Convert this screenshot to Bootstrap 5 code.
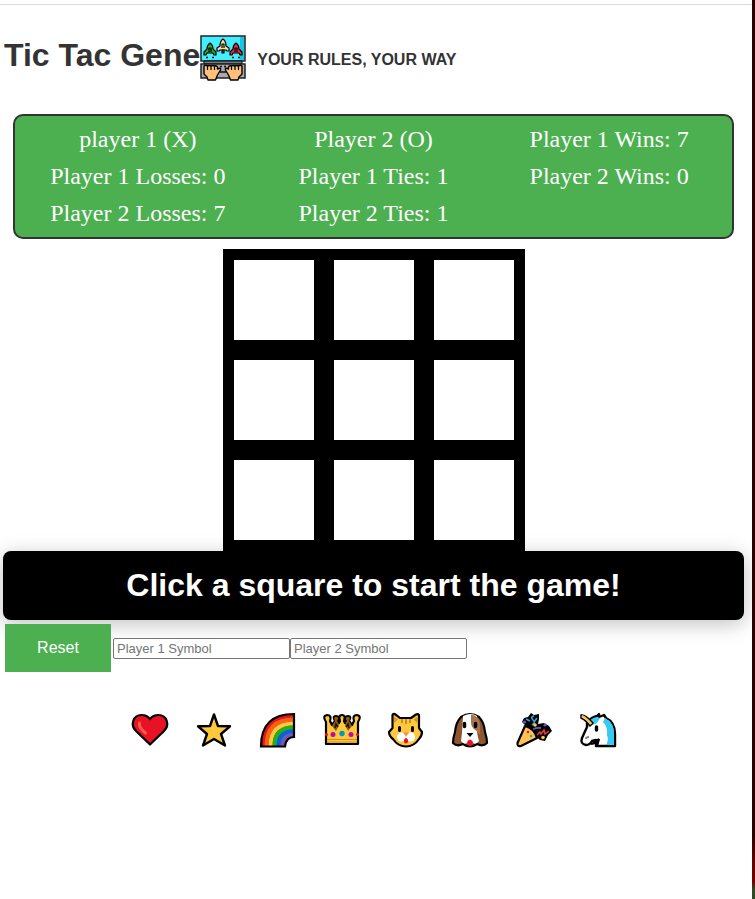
<!DOCTYPE html>
<html lang="en">
<head>
<meta charset="utf-8">
<meta name="viewport" content="width=device-width, initial-scale=1">
<title>Tic Tac Gene</title>
<link href="https://cdn.jsdelivr.net/npm/bootstrap@5.3.0/dist/css/bootstrap.min.css" rel="stylesheet">
<style>
body { font-family: "Liberation Sans", Arial, sans-serif; color: #333; background: #fff; }
.top-rule { height: 5px; border-bottom: 1px solid #d9d9d9; }
.game-page { padding: 0 8px 0 3px; }
.site-header { padding: 30px 1px 33px; }
.site-title { font-size: 32px; line-height: 38px; padding-bottom: 6px; }
.site-logo { width: 46px; height: 46px; }
.tagline { font-size: 16px; line-height: 20px; padding-top: 4px; margin-left: 11px; }
.scores { display: grid; grid-template-columns: repeat(3, 1fr); gap: 10px; margin: 0 10px 10px; padding: 10px; border: 2px solid #333; border-radius: 10px; background: #4caf50; color: #fff; font: 24px/27px "Liberation Serif", "Times New Roman", serif; }
.board { display: grid; grid-template-columns: repeat(3, 100px); width: 302px; border: 1px solid #000; background: #000; }
.square { width: 100px; height: 100px; border: 10px solid #000; background: #fff; padding: 0; }
.status { background: #000; color: #fff; border-radius: 8px; padding: 16px; font-size: 32px; line-height: 37px; box-shadow: 0 4px 20px rgba(0,0,0,.25); }
.controls { padding: 4px 2px 0; }
.reset { width: 106px; height: 48px; border: 0; border-radius: 0; background: #4caf50; color: #fff; font-size: 16px; margin-right: 2px; }
.symbol-input { width: 177px; height: 21px; padding: 1px 3px; border: 1px solid #767676; border-radius: 2px; font-size: 13px; line-height: 15px; color: #000; }
.symbol-input::placeholder { color: #757575; opacity: 1; }
.symbols { padding-top: 38px; }
.symbol { width: 64px; height: 40px; border: 0; background: none; padding: 0; }
.symbol svg { width: 40px; height: 40px; display: block; margin: auto; }
.side-strip { width: 3px; background: linear-gradient(#2b0000 0, #2b0000 93%, #650000 96%, #700000 98%, #2f4a24 99%); }
</style>
</head>
<body>
<div class="d-flex min-vh-100">
<div class="flex-grow-1">
<div class="top-rule"></div>
<div class="game-page">
<header class="site-header d-flex align-items-center">
  <h1 class="site-title fw-bold mb-0">Tic Tac Gene</h1>
  <svg class="site-logo" viewBox="0 0 46 46" aria-hidden="true">
    <path d="M1 1h44v25H1z" fill="#42efff" stroke="#20242a" stroke-width="1.5"/>
    <path d="M40 2h4v23h-4z" fill="#1fc4e0"/>
    <path d="M4 26h38v3H4z" fill="#777b82" stroke="#000"/>
    <path d="M1 29h44v14H1z" fill="#a9a9b2" stroke="#222" stroke-width="1.5"/>
    <path d="M20 31.500h2m2 0h2M20 37h6M6 22.500h2m4 0h2m18 0h2m4 0h2" stroke="#111" stroke-width="1.500"/>
    <g stroke="#000" stroke-width="1.200" stroke-linejoin="round">
      <path d="M10 8c-3 2-3 4-3 6l-3 3v3h2l1-2h6l1 2h2v-3l-3-3c0-2 0-4-3-6z" fill="#3fa32c"/>
      <path d="M23 4c-3 2-3 5-3 7l-3 2v3h2l1-1h6l1 1h2v-3l-3-2c0-2 0-5-3-7z" fill="#f4df9c"/>
      <path d="M36 8c-3 2-3 4-3 6l-3 3v3h2l1-2h6l1 2h2v-3l-3-3c0-2 0-4-3-6z" fill="#ee2c40"/>
      <path d="M9 17v-4h2v4M22 13V9h2v4M35 17v-4h2v4" fill="none"/>
      <path d="M22 15h2v3h-2z" fill="#ef3340"/>
    </g>
    <path id="hand" d="M4 39v-8q2-1.500 3.500 0q2-1 3.500 0q2-1 3.500 0q2-1 3 1v2q4-2 3 1l-3 5-2 5H8l-1-3-3-3z" fill="#ffc17a" stroke="#000" stroke-width="1.400" stroke-linejoin="round"/>
    <path d="M42 39v-8q-2-1.500-3.500 0q-2-1-3.500 0q-2-1-3.500 0q-2-1-3 1v2q-4-2-3 1l3 5 2 5H38l1-3 3-3z" fill="#ffc17a" stroke="#000" stroke-width="1.400" stroke-linejoin="round"/>
    <path d="M7.500 31v4m3.500-4v4m3.500-4v4m24-4v4m-3.500-4v4m-3.500-4v4" stroke="#000" stroke-width="1.200"/>
  </svg>
  <p class="tagline fw-bold mb-0">YOUR RULES, YOUR WAY</p>
</header>
<main>
<section class="scores text-center" aria-label="Scores">
  <div>player 1 (X)</div><div>Player 2 (O)</div><div>Player 1 Wins: 7</div>
  <div>Player 1 Losses: 0</div><div>Player 1 Ties: 1</div><div>Player 2 Wins: 0</div>
  <div>Player 2 Losses: 7</div><div>Player 2 Ties: 1</div>
</section>
<div class="board mx-auto">
  <button class="square" type="button" aria-label="Square 1"></button>
  <button class="square" type="button" aria-label="Square 2"></button>
  <button class="square" type="button" aria-label="Square 3"></button>
  <button class="square" type="button" aria-label="Square 4"></button>
  <button class="square" type="button" aria-label="Square 5"></button>
  <button class="square" type="button" aria-label="Square 6"></button>
  <button class="square" type="button" aria-label="Square 7"></button>
  <button class="square" type="button" aria-label="Square 8"></button>
  <button class="square" type="button" aria-label="Square 9"></button>
</div>
<h2 class="status fw-bold text-center mb-0">Click a square to start the game!</h2>
<div class="controls d-flex align-items-center flex-wrap">
  <button class="reset" type="button">Reset</button>
  <input class="symbol-input" type="text" aria-label="Player 1 Symbol" placeholder="Player 1 Symbol">
  <input class="symbol-input" type="text" aria-label="Player 2 Symbol" placeholder="Player 2 Symbol">
</div>
<div class="symbols d-flex flex-wrap justify-content-center">
  <button class="symbol" type="button" aria-label="Heart"><svg viewBox="0 0 40 40"><path d="M20 34.500L6 21C0 15 3 5 11.500 5Q17 5 20 9Q23 5 28.500 5C37 5 40 15 34 21z" fill="#e81224" stroke="#000" stroke-width="2.200" stroke-linejoin="round"/><path d="M9.500 13c-1 5 3 7 6 10" fill="none" stroke="#f25c4a" stroke-width="3" stroke-linecap="round"/></svg></button>
  <button class="symbol" type="button" aria-label="Star"><svg viewBox="0 0 40 40"><path d="M20 4.500l4 11.500 12 .3-9 7.700 4 11.500-11-6.500-11 6.500 4-11.500-9-7.700 12-.3z" fill="#ffc83d" stroke="#000" stroke-width="2.400" stroke-linejoin="round"/></svg></button>
  <button class="symbol" type="button" aria-label="Rainbow"><svg viewBox="0 0 40 40"><path d="M3 36.500Q3 4 36 4v23q-8 0-9 9.500z" fill="#e81224"/><g fill="none" stroke-width="4"><path d="M8.500 36Q8.500 9.500 36 9.500" stroke="#f7630c"/><path d="M12.500 36Q12.500 13.500 36 13.500" stroke="#ffc83d"/><path d="M16.500 36Q16.500 17.500 36 17.500" stroke="#16b51e"/><path d="M20.500 36Q20.500 21.500 36 21.500" stroke="#0063e6"/><path d="M24.500 36Q24.500 25 36 25" stroke="#7558b5"/></g><path d="M3 36.500Q3 4 36 4v23q-8 0-9 9.500z" fill="none" stroke="#000" stroke-width="2.200"/></svg></button>
  <button class="symbol" type="button" aria-label="Crown"><svg viewBox="0 0 40 40"><path d="M4 34V12Q0 6 5 5q5 0 3 6l2 4 3-4q-3-5 1-5 4 0 2 5l1 2 1-2q-2-6 2-6t2 6l1 2 1-2q-2-5 2-5 4 0 1 5l3 4 2-4q-2-6 3-6 5 1 1 7v22z" fill="#ffc83d" stroke="#000" stroke-width="2.200" stroke-linejoin="round"/><path d="M10 16l3-5q-2-4 1-4t1 4l2 4-3 6zm20 0-3-5q2-4-1-4t-1 4l-2 4 3 6z" fill="#8e5a10"/><path d="M13 18l1-4 2 3m11 1-1-4-2 3" stroke="#1e1304" fill="none" stroke-width="1.500"/><path d="M5 29.500h30M5 32h30" stroke="#d38d18" stroke-width="1"/><circle cx="4.500" cy="24.500" r="1.500" fill="#e81224"/><circle cx="35.500" cy="24.500" r="1.500" fill="#e81224"/><circle cx="11" cy="24.500" r="2.500" fill="#bf0ba3"/><circle cx="20" cy="23.500" r="2.700" fill="#0099bc"/><circle cx="29" cy="24.500" r="2.500" fill="#bf0ba3"/></svg></button>
  <button class="symbol" type="button" aria-label="Cat"><svg viewBox="0 0 40 40"><path d="M6.500 18V5q1-2 3-.5L14 8h11l5-3.500q2-1 3 .5v13l3 4q0 4-3 7-5 7.500-13 7.500T7 29q-4-3-4-7z" fill="#ffc83d" stroke="#000" stroke-width="2.200" stroke-linejoin="round"/><path d="M16 9v4m4-4v5m4-5v4" stroke="#c58721" stroke-width="1.800"/><path d="M8 13V6.500l4 3zm23.500 0V6.500l-4 3z" fill="#d39428"/><circle cx="15.500" cy="27" r="4.500" fill="#fff"/><circle cx="24.500" cy="27" r="4.500" fill="#fff"/><path d="M17 22.500h6l-3 4z" fill="#f58b47"/><path d="M18 30q2-4 4 0v2q-2 3-4 0z" fill="#e81224"/><path d="M13.500 17.500v3m13-3v3" stroke="#000" stroke-width="3" stroke-linecap="round"/></svg></button>
  <button class="symbol" type="button" aria-label="Dog"><svg viewBox="0 0 40 40"><path d="M11 7Q20 1 29 7q5 5 6 15 2 6 2 11-4 4-10 1-7 5-14 0-6 3-10-1 0-5 2-11 1-10 6-15z" fill="#8e562e" stroke="#000" stroke-width="2.200"/><path d="M13 6q8-4 14 0v16q1 6 2 9-3 4-6 2-3 3-6 0-3 2-6-2l1-8z" fill="#fff"/><path d="M21 4.500q8 1 9 10v10l-4-4q-5-3-5-8z" fill="#a97550"/><path d="M14.500 13.500v3m11-3v3" stroke="#000" stroke-width="3.500" stroke-linecap="round"/><path d="M16.500 23h7L20 27z"/><path d="M17 32q3-5 6 0 0 4-3 4t-3-4z" fill="#e81224"/></svg></button>
  <button class="symbol" type="button" aria-label="Party popper"><svg viewBox="0 0 40 40"><path d="M8 12l2-4 4-1 3-4 3 2 5-1v5l-1 5 6-1 5 3 3 5-4 4-3 6-5-1-6-5-9-10z"/><path d="M20 6q-4 1-1 4t-1 5M12 9l4 2m7-3-3 4" fill="none" stroke="#2aa7e2" stroke-width="1.600"/><circle cx="10.500" cy="12" r="1.600" fill="#7153bd"/><circle cx="31" cy="15" r="1.600" fill="#7153bd"/><path d="M18 22q1-5 9-4" fill="none" stroke="#7153bd" stroke-width="1.800"/><path d="M23 25l3-3 1 2 3-4 1 4 4-3" fill="none" stroke="#ed3847" stroke-width="1.500"/><circle cx="21" cy="15" r="1.800" fill="#ffc83d"/><circle cx="29" cy="27.500" r="1.800" fill="#ffc83d"/><path d="M11 16Q20 18 23 28L7 36q-4 1-3.500-3z" fill="#ffc252" stroke="#000" stroke-width="2.200" stroke-linejoin="round"/><circle cx="14" cy="22" r="1.200" fill="#e81224"/><circle cx="17" cy="26" r="1.200" fill="#16a7c8"/></svg></button>
  <button class="symbol" type="button" aria-label="Unicorn"><svg viewBox="0 0 40 40"><path d="M9 13q4-6 10-7l2-2v3l5-2 2 3q9 4 9 16v12H18v-6l-4 1q-2 4-6 4-6-1-4-7l5-11z" fill="#fff" stroke="#000" stroke-width="2.400" stroke-linejoin="round"/><path d="M10 16q1-8 9-9l3 1-3 5-9 4zM27 8q9 4 9 16v11h-8q3-5 1-10 1-8-4-13z" fill="#35cbf2"/><path d="M3 5q4-1 12 8l-3 3q-3-5-9-8z" fill="#ffc252" stroke="#000" stroke-width="1.500" stroke-linejoin="round"/><path d="M4 6q4 2 9 8" fill="none" stroke="#ffc252" stroke-width="2.500"/><path d="M18.500 17v3" stroke="#000" stroke-width="3.400" stroke-linecap="round"/><path d="M8 29q0-2 3-2" stroke="#888" stroke-width="2" fill="none"/><path d="M13 34q5-1 8-5l-2 7" fill="none" stroke="#000" stroke-width="2.200"/></svg></button>
</div>
</main>
</div>
</div>
<div class="side-strip flex-shrink-0" aria-hidden="true"></div>
</div>
<script src="https://cdn.jsdelivr.net/npm/bootstrap@5.3.0/dist/js/bootstrap.bundle.min.js"></script>
</body>
</html>
